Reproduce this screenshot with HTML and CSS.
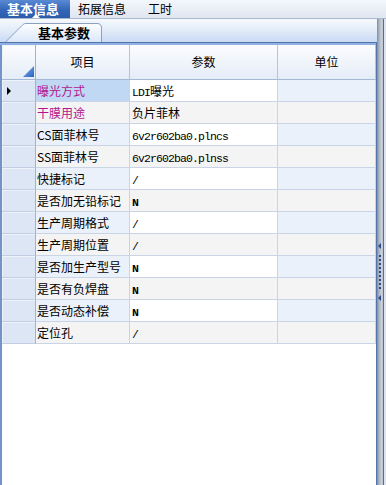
FILE: index.html
```html
<!DOCTYPE html>
<html lang="zh-CN">
  <head>
    <meta charset="UTF-8" />
    <meta name="viewport" content="width=device-width, initial-scale=1.0" />
    <title>基本参数</title>
    <link rel="stylesheet" href="styles.css">
  </head>
  <body>
    <div class="menubar">
      <div class="menuTab active">基本信息</div>
      <div class="menuTab">拓展信息</div>
      <div class="menuTab">工时</div>
    </div>
    <div class="frame">
      <div class="main">
        <div class="tabstrip">
          <div class="tab">
            <svg class="tabShape" width="97" height="19" viewBox="0 0 97 19">
              <defs>
                <linearGradient id="tabFill" x1="0" y1="0" x2="0" y2="1">
                  <stop offset="0" stop-color="#ffffff" />
                  <stop offset="1" stop-color="#d9e6f8" />
                </linearGradient>
              </defs>
              <path d="M0.5 19 L18 1.5 Q19 0.5 21 0.5 L92 0.5 Q96.5 0.5 96.5 5 L96.5 19" fill="url(#tabFill)" stroke="#8b9fc0" />
            </svg>
            <span class="tabText">基本参数</span>
          </div>
        </div>
        <div class="gridTop"></div>
        <div class="grid">
          <div class="row head">
            <div class="cell rowHead corner">
              <svg width="11" height="11" viewBox="0 0 11 11">
                <defs>
                  <linearGradient id="cornerFill" x1="0" y1="0" x2="1" y2="1">
                    <stop offset="0" stop-color="#7fb0ec" />
                    <stop offset="1" stop-color="#2a62c2" />
                  </linearGradient>
                </defs>
                <path d="M0 11 L11 0 L11 11 Z" fill="url(#cornerFill)" />
              </svg>
            </div>
            <div class="cell">项目</div>
            <div class="cell">参数</div>
            <div class="cell">单位</div>
          </div>

          <div class="row odd">
            <div class="cell rowHead"><span class="pointer"></span></div>
            <div class="cell name selected pink">曝光方式</div>
            <div class="cell value"><span class="mono">LDI</span>曝光</div>
            <div class="cell unit"></div>
          </div>
          <div class="row even">
            <div class="cell rowHead"></div>
            <div class="cell name pink">干膜用途</div>
            <div class="cell value">负片菲林</div>
            <div class="cell unit"></div>
          </div>
          <div class="row odd">
            <div class="cell rowHead"></div>
            <div class="cell name">CS面菲林号</div>
            <div class="cell value"><span class="mono">6v2r602ba0.plncs</span></div>
            <div class="cell unit"></div>
          </div>
          <div class="row even">
            <div class="cell rowHead"></div>
            <div class="cell name">SS面菲林号</div>
            <div class="cell value"><span class="mono">6v2r602ba0.plnss</span></div>
            <div class="cell unit"></div>
          </div>
          <div class="row odd">
            <div class="cell rowHead"></div>
            <div class="cell name">快捷标记</div>
            <div class="cell value"><span class="mono">/</span></div>
            <div class="cell unit"></div>
          </div>
          <div class="row even">
            <div class="cell rowHead"></div>
            <div class="cell name">是否加无铅标记</div>
            <div class="cell value"><span class="mono bold">N</span></div>
            <div class="cell unit"></div>
          </div>
          <div class="row odd">
            <div class="cell rowHead"></div>
            <div class="cell name">生产周期格式</div>
            <div class="cell value"><span class="mono">/</span></div>
            <div class="cell unit"></div>
          </div>
          <div class="row even">
            <div class="cell rowHead"></div>
            <div class="cell name">生产周期位置</div>
            <div class="cell value"><span class="mono">/</span></div>
            <div class="cell unit"></div>
          </div>
          <div class="row odd">
            <div class="cell rowHead"></div>
            <div class="cell name">是否加生产型号</div>
            <div class="cell value"><span class="mono bold">N</span></div>
            <div class="cell unit"></div>
          </div>
          <div class="row even">
            <div class="cell rowHead"></div>
            <div class="cell name">是否有负焊盘</div>
            <div class="cell value"><span class="mono bold">N</span></div>
            <div class="cell unit"></div>
          </div>
          <div class="row odd">
            <div class="cell rowHead"></div>
            <div class="cell name">是否动态补偿</div>
            <div class="cell value"><span class="mono bold">N</span></div>
            <div class="cell unit"></div>
          </div>
          <div class="row even">
            <div class="cell rowHead"></div>
            <div class="cell name">定位孔</div>
            <div class="cell value"><span class="mono">/</span></div>
            <div class="cell unit"></div>
          </div>
        </div>
      </div>
      <div class="splitter">
        <span class="arrow"></span>
        <span class="grip"></span>
        <span class="arrow"></span>
      </div>
    </div>
  </body>
</html>
```

FILE: styles.css
```css
* {
  margin: 0;
  padding: 0;
  box-sizing: border-box;
  font-family: "Noto Sans CJK SC", "Liberation Sans", sans-serif;
}
body {
  width: 386px;
  height: 485px;
  overflow: hidden;
  background-color: #ffffff;
  color: #000000;
  font-size: 12px;
}
.menubar {
  display: flex;
  height: 19px;
  background: linear-gradient(180deg, #f4f7fb 0%, #dfe6f0 100%);
  border-bottom: 1px solid #a9b8cd;
}
.menuTab {
  position: relative;
  padding: 0 14px 0 8px;
  line-height: 18px;
  font-size: 12px;
  white-space: nowrap;
}
.menuTab.active {
  width: 70px;
  padding: 0 0 0 7px;
  color: #ffffff;
  font-weight: bold;
  font-size: 13px;
  background: linear-gradient(180deg, #5a8ad4 0%, #3466b8 55%, #2d5cab 100%);
}
.menuTab.active::after {
  content: "";
  position: absolute;
  left: 32px;
  bottom: 0;
  border-left: 4px solid transparent;
  border-right: 4px solid transparent;
  border-bottom: 4px solid #ffffff;
}
.frame {
  display: flex;
  height: 466px;
}
.main {
  display: flex;
  flex-direction: column;
  width: 377px;
}
.tabstrip {
  height: 23px;
  padding: 4px 0 0 5px;
  background: linear-gradient(180deg, #f6f9fd 0%, #e4edf9 45%, #c9daf4 100%);
}
.tab {
  position: relative;
  width: 97px;
  height: 19px;
}
.tabShape {
  position: absolute;
  left: 0;
  top: 0;
}
.tabText {
  position: relative;
  display: block;
  padding-left: 33px;
  line-height: 19px;
  font-size: 13px;
  font-weight: bold;
}
.gridTop {
  height: 3px;
  background: linear-gradient(180deg, #5473a9 0px, #5473a9 1px, #8fb1e3 1px);
  border-right: 1px solid #5473a9;
}
.grid {
  flex: 1;
  border-left: 2px solid #7494c9;
  border-right: 1px solid #5473a9;
  background-color: #ffffff;
}
.row {
  display: grid;
  grid-template-columns: 34px 94px 148px 98px;
  height: 22px;
}
.row.head {
  height: 35px;
}
.cell {
  border-right: 1px solid #c9d5e7;
  border-bottom: 1px solid #c9d5e7;
  line-height: 21px;
  white-space: nowrap;
  overflow: hidden;
}
.head .cell {
  background: linear-gradient(180deg, #fbfcfe 0%, #eef3fa 60%, #e4ecf7 100%);
  border-right-color: #b7c4d8;
  border-bottom-color: #a5b8d4;
  line-height: 34px;
  text-align: center;
}
.rowHead {
  display: flex;
  align-items: center;
  padding-left: 5px;
  background-color: #dce6f4;
  border-right: 1px solid #9fb2d0;
  border-bottom-color: #c2cfe3;
  box-shadow: inset 1px 1px 0 #eef3fa;
}
.head .rowHead.corner {
  align-items: flex-end;
  justify-content: flex-end;
  padding: 0 1px 2px 0;
  border-right-color: #9fb2d0;
}
.corner svg {
  display: block;
}
.pointer {
  width: 0;
  height: 0;
  border-top: 4px solid transparent;
  border-bottom: 4px solid transparent;
  border-left: 4px solid #000000;
}
.name {
  padding-left: 1px;
}
.value {
  padding-left: 2px;
}
.odd .name,
.odd .unit {
  background-color: #eaf1fb;
}
.even .name,
.even .unit,
.even .value {
  background-color: #f4f4f4;
}
.odd .value {
  background-color: #ffffff;
}
.name.selected {
  background-color: #c1d8f4;
}
.pink {
  color: #b3168f;
}
.mono {
  font-family: "Liberation Mono", monospace;
  font-size: 11.5px;
  letter-spacing: -0.9px;
}
.bold {
  font-weight: bold;
}
.splitter {
  display: flex;
  flex-direction: column;
  align-items: flex-start;
  width: 9px;
  padding: 224px 0 0 1px;
  background: linear-gradient(90deg, #7f8ca2 0px, #a9b3c2 2px, #cfd5de 5px, #b3bbc8 6px, #4e6ea6 6px, #4e6ea6 7px, #dde4ef 7px);
}
.arrow {
  width: 0;
  height: 0;
  border-top: 3px solid transparent;
  border-bottom: 3px solid transparent;
  border-right: 3px solid #2d4c86;
}
.grip {
  width: 2px;
  height: 34px;
  margin: 6px 0 6px 1px;
  background: repeating-linear-gradient(180deg, #2d4c86 0px, #2d4c86 2px, transparent 2px, transparent 4px);
}
```
